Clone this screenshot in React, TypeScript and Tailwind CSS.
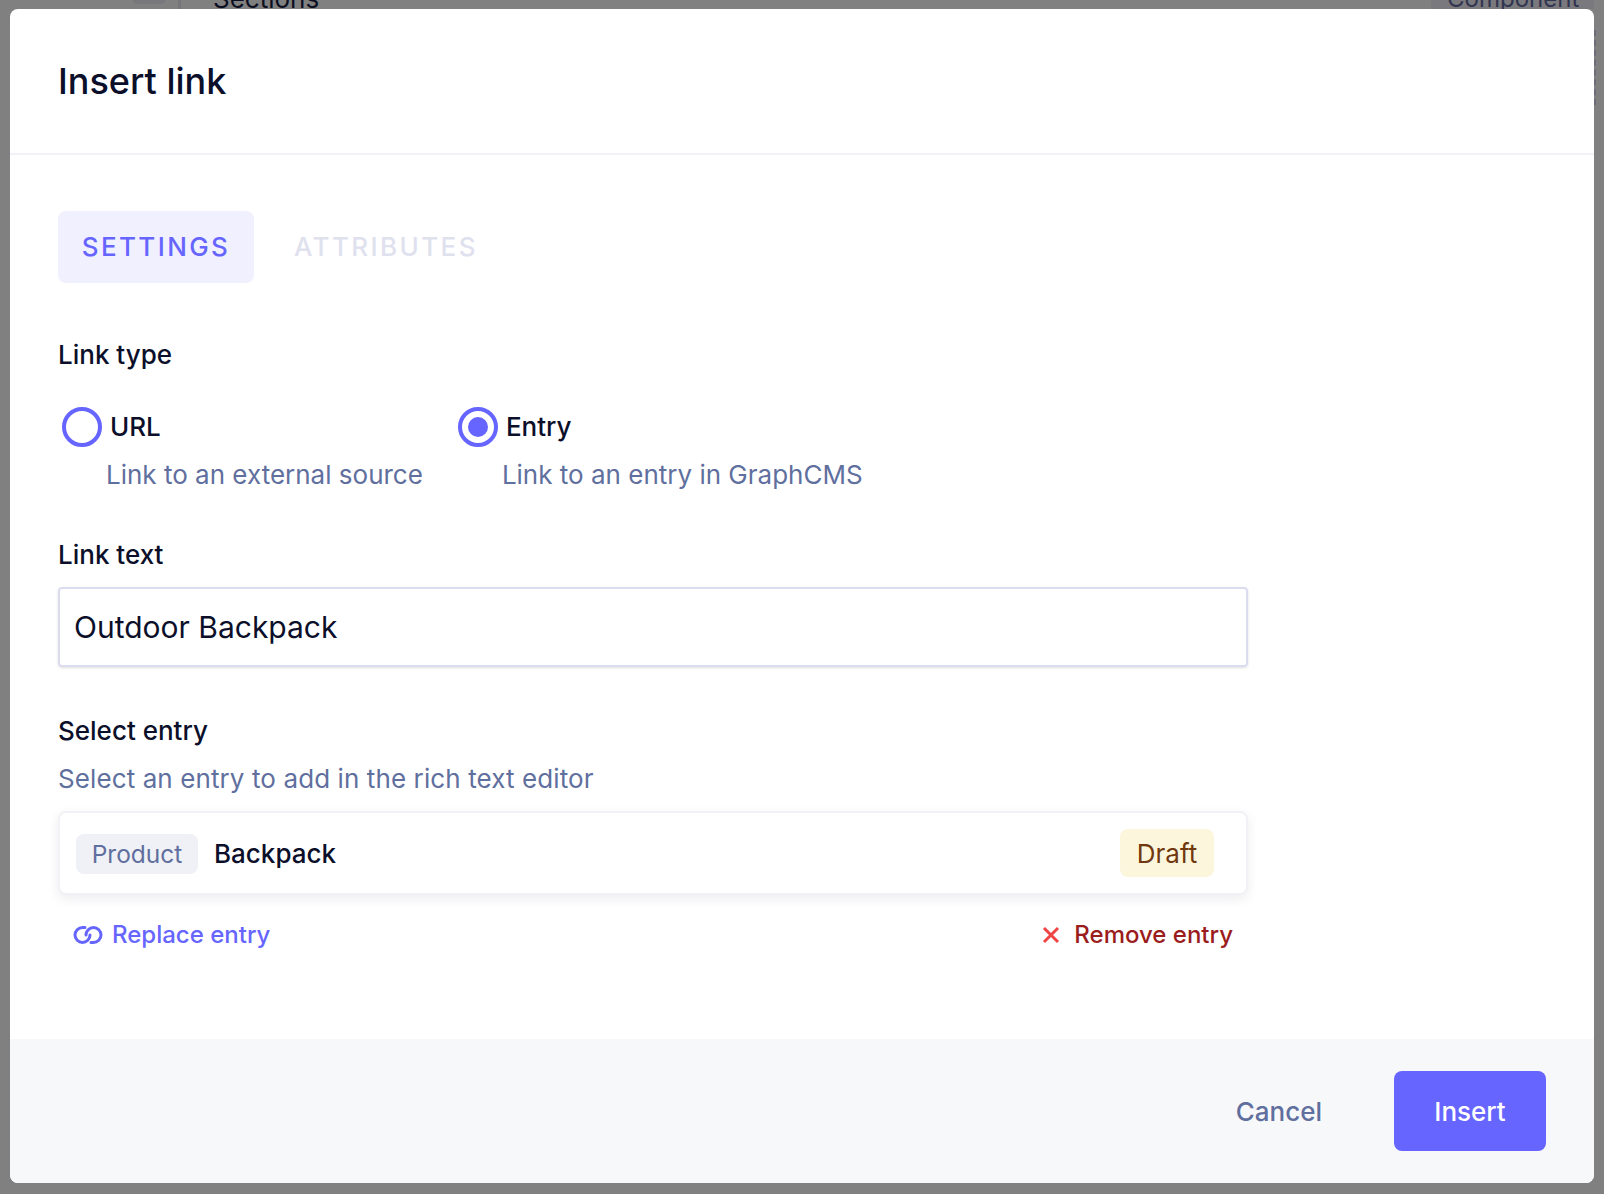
const SANS = "font-['Inter',sans-serif]";

function Radio({ checked }: { checked?: boolean }) {
  return (
    <span className="flex h-10 w-10 shrink-0 items-center justify-center rounded-full border-4 border-[#6665ff] bg-white">
      {checked && <span className="h-5 w-5 rounded-full bg-[#6665ff]" />}
    </span>
  );
}

function RadioOption({ label, hint, checked }: { label: string; hint: string; checked?: boolean }) {
  return (
    <div className="flex flex-col">
      <div className="flex items-center gap-2 pl-1">
        <Radio checked={checked} />
        <span className="text-[26px] font-[450] leading-10 text-[#0b0f2a]">{label}</span>
      </div>
      <span className="mt-[8px] pl-12 text-[26px] leading-10 text-[#5f6f9e]">{hint}</span>
    </div>
  );
}

function LinkRings() {
  return (
    <svg width="30" height="20" viewBox="0 0 30 20" fill="none" stroke="#6665ff" strokeWidth="3" strokeLinecap="round">
      <path d="M12 2.5H9.5a7.5 7.5 0 0 0 0 15 7.5 7.5 0 0 0 7.5-7.5" />
      <path d="M18 17.5h2.5a7.5 7.5 0 0 0 0-15 7.5 7.5 0 0 0-7.5 7.5" />
    </svg>
  );
}

export default function App() {
  return (
    <div className={`${SANS} relative h-[1194px] w-full overflow-hidden bg-[#808080]`}>
      {/* page behind the dimmed overlay */}
      <span className="absolute left-[133px] top-0 h-[4px] w-[32px] rounded-b bg-[#78787c]" />
      <span className="absolute left-[178px] top-0 h-[9px] w-[3px] bg-[#76767a]" />
      <span className="absolute left-[213px] top-[-17px] text-[26px] leading-8 text-[#0c0f22]">Sections</span>
      <span className="absolute left-[1431px] top-0 h-[9px] w-[163px] bg-[#7a7a7e]" />
      <span className="absolute left-[1447px] top-[-17px] text-[24px] leading-8 text-[#30344f]">Component</span>
      <span className="absolute left-[1594px] top-[30px] h-[75px] border-l-2 border-dashed border-[#6b6c78]" />

      <div className="absolute left-[10px] top-[9px] flex h-[1174px] w-[1584px] flex-col overflow-hidden rounded-lg bg-white">
        <header className="flex h-[146px] shrink-0 items-center border-b-2 border-[#f1f1f6] pl-12">
          <h1 className="text-[36px] font-[450] leading-[48px] text-[#0b0f2a]">Insert link</h1>
        </header>

        <main className="flex-1 pl-12 pt-14">
          <div className="flex items-center gap-10">
            <button className="flex h-[72px] w-[196px] items-center justify-center rounded-lg bg-[#f1f0ff] pb-[2px] text-[26px] font-[450] tracking-[2.4px] text-[#6665ff]">
              SETTINGS
            </button>
            <button className="pb-[2px] text-[26px] font-[450] tracking-[2.4px] text-[#dfe1ee]">ATTRIBUTES</button>
          </div>

          <div className="mt-[52px] text-[26px] font-[450] leading-10 text-[#0b0f2a]">Link type</div>
          <div className="mt-[32px] flex gap-[31px]">
            <RadioOption label="URL" hint="Link to an external source" />
            <RadioOption label="Entry" hint="Link to an entry in GraphCMS" checked />
          </div>

          <div className="mt-[40px] w-[1190px]">
            <div className="text-[26px] font-[450] leading-10 text-[#0b0f2a]">Link text</div>
            <div className="mt-[12px] flex h-20 items-center rounded border-2 border-[#dcdcf0] px-[14px] text-[30px] text-[#0b0f2a] shadow-sm">
              Outdoor Backpack
            </div>

            <div className="mt-[44px] text-[26px] font-[450] leading-10 text-[#0b0f2a]">Select entry</div>
            <div className="mt-[8px] text-[26px] leading-10 tracking-[0.1px] text-[#5f6f9e]">
              Select an entry to add in the rich text editor
            </div>
            <div className="mt-[12px] flex h-[84px] items-center rounded-lg border-2 border-[#f1f1f6] bg-white pl-4 pr-8 shadow-[0_4px_12px_rgba(20,20,60,0.08)]">
              <span className="mt-[2px] flex h-10 w-[122px] items-center justify-center rounded-lg bg-[#f0f1f6] text-[24.5px] text-[#5f6f9e]">
                Product
              </span>
              <span className="ml-4 text-[26px] font-[450] text-[#0b0f2a]">Backpack</span>
              <span className="ml-auto flex h-12 w-[94px] items-center justify-center rounded-lg bg-[#fbf6dc] text-[26px] text-[#70380f]">
                Draft
              </span>
            </div>
            <div className="mt-[20px] flex items-center justify-between px-[15px]">
              <span className="flex items-center gap-[9px] text-[24px] font-[450] leading-10 text-[#6665ff]">
                <LinkRings />
                Replace entry
              </span>
              <span className="flex items-center gap-[14px] text-[24px] font-[450] leading-10 text-[#9b1c1c]">
                <svg width="18" height="18" viewBox="0 0 18 18" fill="none" stroke="#f04545" strokeWidth="3">
                  <path d="M2 2l14 14M16 2L2 16" />
                </svg>
                Remove entry
              </span>
            </div>
          </div>
        </main>

        <footer className="flex h-[144px] shrink-0 items-center justify-end gap-[72px] bg-[#f7f8fa] pr-12">
          <button className="text-[26px] font-[450] text-[#5f6f9e]">Cancel</button>
          <button className="flex h-20 w-[152px] items-center justify-center rounded-lg bg-[#6665ff] text-[26px] font-[450] text-white">
            Insert
          </button>
        </footer>
      </div>
    </div>
  );
}
